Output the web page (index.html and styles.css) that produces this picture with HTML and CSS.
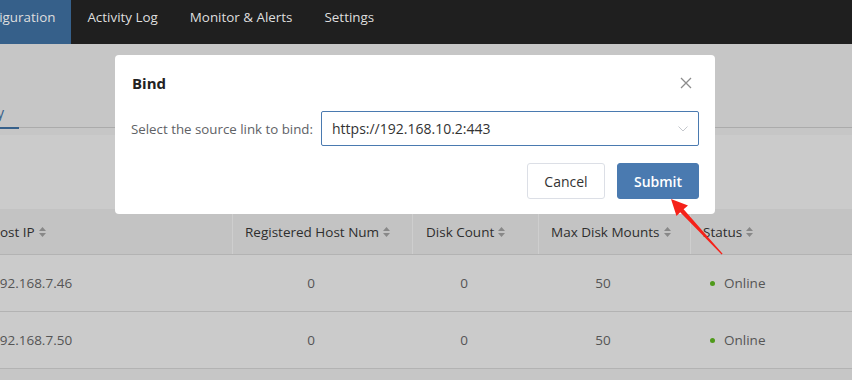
FILE: index.html
```html
<!DOCTYPE html>
<html>
<head>
<meta charset="utf-8">
<link rel="stylesheet" href="styles.css">
</head>
<body>
<div class="app">
  <header class="nav">
    <span class="nav-item first active">Configuration</span>
    <span class="nav-item">Activity Log</span>
    <span class="nav-item">Monitor &amp; Alerts</span>
    <span class="nav-item">Settings</span>
  </header>
  <main class="content">
    <div class="tabs"><span class="tab">Summary</span></div>
    <div class="filter-band"></div>
    <div class="table">
      <div class="row head">
        <div class="cell c1"><span class="first-text">Host IP</span><svg class="sort" viewBox="0 0 7 10"><path d="M3.5 0L7 4H0z M3.5 10L0 6h7z"/></svg></div>
        <div class="cell c2">Registered Host Num<svg class="sort" viewBox="0 0 7 10"><path d="M3.5 0L7 4H0z M3.5 10L0 6h7z"/></svg></div>
        <div class="cell c3">Disk Count<svg class="sort" viewBox="0 0 7 10"><path d="M3.5 0L7 4H0z M3.5 10L0 6h7z"/></svg></div>
        <div class="cell c4">Max Disk Mounts<svg class="sort" viewBox="0 0 7 10"><path d="M3.5 0L7 4H0z M3.5 10L0 6h7z"/></svg></div>
        <div class="cell c5">Status<svg class="sort" viewBox="0 0 7 10"><path d="M3.5 0L7 4H0z M3.5 10L0 6h7z"/></svg></div>
      </div>
      <div class="row body">
        <div class="cell c1"><span class="first-ip">192.168.7.46</span></div>
        <div class="cell c2">0</div>
        <div class="cell c3">0</div>
        <div class="cell c4">50</div>
        <div class="cell c5"><span class="dot"></span>Online</div>
      </div>
      <div class="row body">
        <div class="cell c1"><span class="first-ip">192.168.7.50</span></div>
        <div class="cell c2">0</div>
        <div class="cell c3">0</div>
        <div class="cell c4">50</div>
        <div class="cell c5"><span class="dot"></span>Online</div>
      </div>
    </div>
  </main>
</div>

<div class="modal">
  <div class="modal-head">
    <span class="modal-title">Bind</span>
    <svg class="close" viewBox="0 0 12 12"><path d="M1 1L11 11M11 1L1 11"/></svg>
  </div>
  <div class="modal-body">
    <label class="field-label">Select the source link to bind:</label>
    <div class="select">
      <span class="select-value">https://192.168.10.2:443</span>
      <svg class="chevron" viewBox="0 0 10 6"><path d="M0.5 0.5L5 5L9.5 0.5"/></svg>
    </div>
  </div>
  <div class="modal-foot">
    <button class="btn btn-default">Cancel</button>
    <button class="btn btn-primary">Submit</button>
  </div>
</div>

<svg class="arrow" viewBox="0 0 852 380"><polygon points="671,199 688,205.5 683.6,209.3 722.6,253.8 721.6,254.4 680.2,212.2 676.5,216"/></svg>
</body>
</html>
```

FILE: styles.css
```css
* { box-sizing: border-box; }
html, body { margin: 0; padding: 0; }
body {
  width: 852px;
  height: 380px;
  overflow: hidden;
  background: #c6c6c6;
  font-family: "Open Sans", "Noto Sans", sans-serif;
  font-size: 13px;
  color: #333;
  position: relative;
}

.nav {
  height: 44px;
  background: #1f1f1f;
  display: flex;
  align-items: stretch;
  white-space: nowrap;
}
.nav-item {
  display: flex;
  align-items: center;
  padding: 0 16px 10px 16px;
  color: #dedede;
  font-size: 13.4px;
}
.nav-item.first { margin-left: -46px; }
.nav-item.active { background: #36608a; }

.tabs {
  padding-top: 58px;
  border-bottom: 1px solid #ababab;
  white-space: nowrap;
}
.tab {
  display: inline-block;
  width: 100px;
  text-align: right;
  line-height: 20px;
  font-size: 14px;
  padding-bottom: 4px;
  padding-right: 15px;
  margin-left: -81px;
  margin-bottom: -1px;
  color: #36608a;
  border-bottom: 2px solid #36608a;
  position: relative;
  top: 1px;
}

.filter-band {
  margin-top: 7px;
  height: 74px;
  background: #cbcbcb;
}

.row {
  display: grid;
  grid-template-columns: 233px 180px 126px 152px 1fr;
  border-bottom: 1px solid #b3b3b3;
  font-size: 13.5px;
}
.row.head {
  height: 46px;
  background: #c3c3c3;
  color: #2e2e2e;
}
.row.body {
  height: 57px;
  background: #cbcbcb;
  color: #555;
}
.cell {
  display: flex;
  align-items: center;
  white-space: nowrap;
}
.head .cell { border-right: 1px solid #cecece; }
.head .cell:last-child { border-right: none; }
.head .c2 { padding-left: 12px; }
.head .c3 { padding-left: 13px; }
.head .c4 { padding-left: 12px; }
.head .c5 { padding-left: 12px; }

.body .cell { justify-content: center; padding-right: 24px; }
.body .c1 { justify-content: flex-start; padding-right: 0; }
.body .c5 { justify-content: flex-start; padding-left: 19px; padding-right: 0; }

.first-text { margin-left: -10px; }
.first-ip { margin-left: -8px; }

.sort {
  width: 7px;
  height: 10px;
  margin-left: 4px;
  fill: #888;
}

.dot {
  width: 5px;
  height: 5px;
  border-radius: 50%;
  background: #4f9a1b;
  margin-right: 9px;
}

.modal {
  position: absolute;
  left: 115px;
  top: 55px;
  width: 600px;
  height: 159px;
  background: #fff;
  border-radius: 4px;
  padding: 17px 16px 15px 16px;
}
.modal-head {
  display: flex;
  align-items: center;
  justify-content: space-between;
  height: 22px;
  padding-left: 1px;
  padding-right: 7px;
}
.modal-title {
  font-size: 15px;
  font-weight: 700;
  color: #222;
}
.close {
  width: 12px;
  height: 12px;
  stroke: #8c8c8c;
  stroke-width: 1.3;
  fill: none;
}
.modal-body {
  margin-top: 17px;
  display: flex;
  align-items: center;
}
.field-label {
  color: #606266;
  font-size: 13.3px;
  width: 190px;
  white-space: nowrap;
}
.select {
  flex: 1;
  height: 35px;
  border: 1px solid #4a7ab0;
  border-radius: 2px;
  display: flex;
  align-items: center;
  justify-content: space-between;
  padding: 0 10px 0 10px;
}
.select-value {
  font-size: 14px;
  color: #333;
}
.chevron {
  width: 10px;
  height: 6px;
  stroke: #c4c7cc;
  stroke-width: 1;
  fill: none;
}
.modal-foot {
  margin-top: 17px;
  display: flex;
  justify-content: flex-end;
  gap: 12px;
}
.btn {
  height: 36px;
  font-family: inherit;
  font-size: 14px;
  border-radius: 3px;
  padding: 0;
}
.btn-default {
  width: 78px;
  background: #fff;
  border: 1px solid #dcdfe6;
  color: #333;
}
.btn-primary {
  width: 82px;
  background: #4a7ab0;
  border: 1px solid #4a7ab0;
  color: #fff;
  font-weight: 600;
}

.arrow {
  position: absolute;
  left: 0;
  top: 0;
  width: 852px;
  height: 380px;
  fill: #f5221a;
  pointer-events: none;
}
```
